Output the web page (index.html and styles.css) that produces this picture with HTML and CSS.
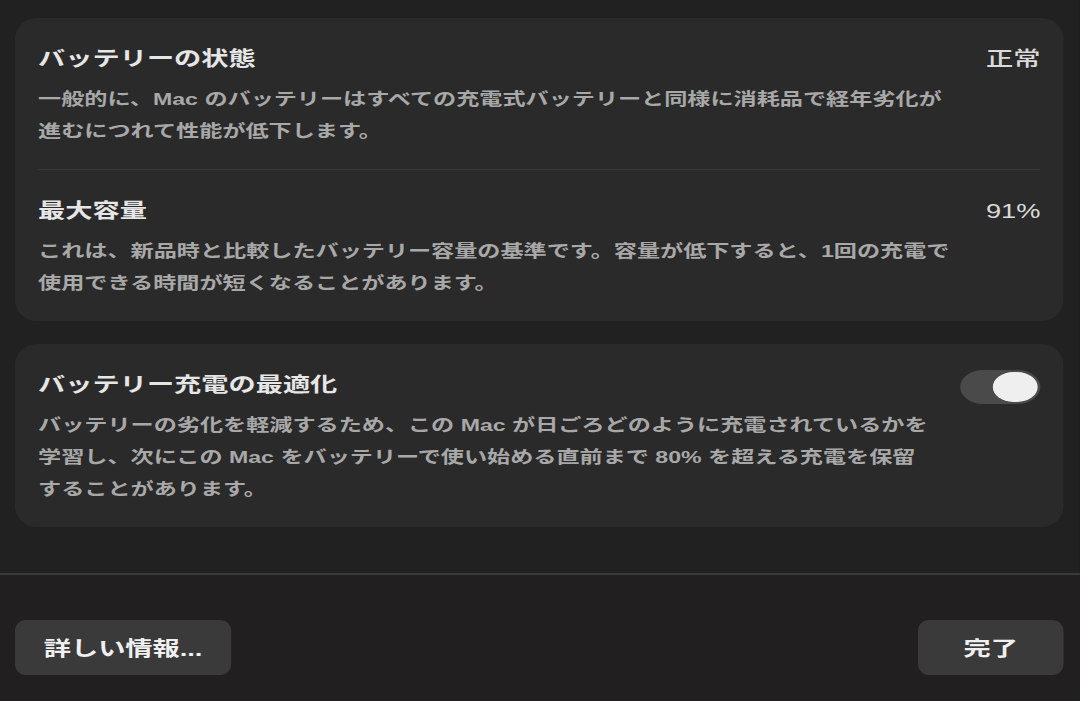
FILE: index.html
```html
<!DOCTYPE html>
<html lang="ja">
<head>
    <meta charset="UTF-8">
    <title>バッテリー</title>
    <link rel="stylesheet" href="styles.css">
</head>
<body>
    <div class="sheet">
        <div class="content">
            <section class="card">
                <div class="row">
                    <div class="text">
                        <h2 class="title">バッテリーの状態</h2>
                        <p class="desc">一般的に、Mac のバッテリーはすべての充電式バッテリーと同様に消耗品で経年劣化が<br>進むにつれて性能が低下します。</p>
                    </div>
                    <div class="value">正常</div>
                </div>
                <div class="row">
                    <div class="text">
                        <h2 class="title">最大容量</h2>
                        <p class="desc">これは、新品時と比較したバッテリー容量の基準です。容量が低下すると、1回の充電で<br>使用できる時間が短くなることがあります。</p>
                    </div>
                    <div class="value">91%</div>
                </div>
            </section>
            <section class="card">
                <div class="row">
                    <div class="text">
                        <h2 class="title">バッテリー充電の最適化</h2>
                        <p class="desc">バッテリーの劣化を軽減するため、この Mac が日ごろどのように充電されているかを<br>学習し、次にこの Mac をバッテリーで使い始める直前まで 80% を超える充電を保留<br>することがあります。</p>
                    </div>
                    <div class="toggle on"><span class="knob"></span></div>
                </div>
            </section>
        </div>
        <div class="footer">
            <a href="#" class="btn btn-info">詳しい情報...</a>
            <a href="#" class="btn btn-done">完了</a>
        </div>
    </div>
</body>
</html>
```

FILE: styles.css
```css
* {
    margin: 0;
    padding: 0;
    box-sizing: border-box;
    text-decoration: none;
}
body {
    background: #211f20;
    font-family: "Liberation Sans", "Noto Sans CJK JP", sans-serif;
    overflow: hidden;
}
/* the screenshot is stretched sideways, so the whole sheet is too */
.sheet {
    width: 794px;
    height: 701px;
    display: flex;
    flex-direction: column;
    transform: scaleX(1.36);
    transform-origin: 0 0;
}
.content {
    flex: 1;
    background: #212121;
    padding: 18px 12px 0 11px;
    display: flex;
    flex-direction: column;
    gap: 23px;
}
.card {
    background: #2a2a2a;
    border-radius: 16px / 21px;
    padding: 0 17px;
}
.row {
    display: flex;
    justify-content: space-between;
    align-items: flex-start;
    padding: 26px 0 21px;
}
.row + .row {
    border-top: 1px solid #383838;
}
.title {
    font-size: 20px;
    line-height: 30px;
    font-weight: 700;
    color: #e6e6e6;
}
.desc {
    margin-top: 10px;
    font-size: 17px;
    line-height: 32px;
    font-weight: 700;
    color: #a8a8a8;
    white-space: nowrap;
}
.value {
    font-size: 20px;
    line-height: 30px;
    font-weight: 500;
    color: #dadada;
}
.toggle {
    width: 59px;
    height: 34px;
    border-radius: 17px;
    background: #4a4a4a;
    padding: 2px;
    display: flex;
    justify-content: flex-end;
    align-items: center;
}
.knob {
    width: 33px;
    height: 30px;
    border-radius: 15px;
    background: #efefef;
}
.footer {
    height: 128px;
    border-top: 2px solid #3a3a3a;
    padding: 45px 12px 0 11px;
    display: flex;
    justify-content: space-between;
    align-items: flex-start;
}
.btn {
    height: 55px;
    border-radius: 8px / 11px;
    background: #3b3a3b;
    color: #f0f0f0;
    font-size: 20px;
    font-weight: 700;
    display: flex;
    align-items: center;
    justify-content: center;
}
.btn-info {
    width: 159px;
}
.btn-done {
    width: 107px;
}
```
